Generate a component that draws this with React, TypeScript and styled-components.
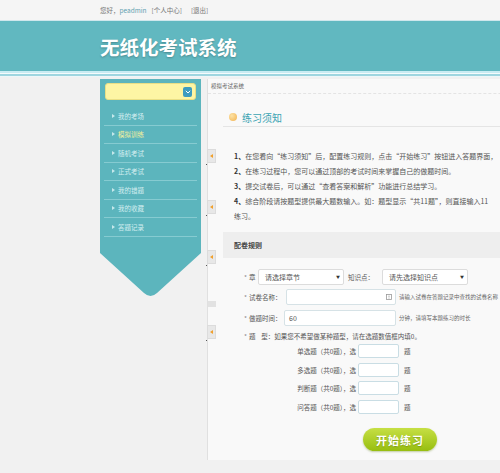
import React from 'react'
import styled, { createGlobalStyle } from 'styled-components'

const GlobalStyle = createGlobalStyle`
  html, body {
    margin: 0;
    padding: 0;
    background: #f1f1f1;
    overflow: hidden;
    font-family: "Noto Sans CJK SC", "Noto Sans", sans-serif;
  }
  * { box-sizing: border-box; }
`

const Page = styled.div`
  width: 500px;
  overflow: hidden;
`

const TopBar = styled.div`
  height: 21px;
  padding-left: 100px;
  display: flex;
  align-items: center;
  gap: 5px;
  font-size: 6.5px;
  color: #777;
  background: #f5f5f5;
  border-bottom: 1px solid #cfe7ec;

  b {
    font-weight: normal;
    color: #5e9fb0;
  }
`

const Header = styled.div`
  height: 50px;
  background: #61b8c0;
  padding-left: 100px;
  display: flex;
  align-items: center;
`

const Title = styled.h1`
  margin: 0;
  font-size: 19.5px;
  font-weight: bold;
  color: #fff;
  text-shadow: 0 1px 2px rgba(0, 0, 0, 0.25);
`

const Stripe = styled.div`
  height: 6px;
  background: linear-gradient(#c9ecf3 0, #c9ecf3 2px, #f4fbfc 2px, #f4fbfc 3px, #9fd6e0 3px, #9fd6e0 5px, #eef7f9 5px);
`

const Body = styled.div`
  display: flex;
  align-items: flex-start;
  padding-left: 100px;
  margin-top: 2px;
`

const Sidebar = styled.aside`
  width: 101px;
  flex-shrink: 0;
  display: flex;
  flex-direction: column;
`

const SideBody = styled.div`
  background: #5cb5bd;
  padding: 4px 4px 16px;
`

const Search = styled.div`
  margin: 0 1px;
  height: 17px;
  background: #fdf5a4;
  border-radius: 3px;
  border: 1px solid #e9df86;
  display: flex;
  align-items: center;
  justify-content: flex-end;
  padding-right: 3px;
`

const SearchBtn = styled.span`
  width: 9px;
  height: 10px;
  border-radius: 2px;
  background: #3d9cbf;
  display: flex;
  align-items: center;
  justify-content: center;
`

const Menu = styled.ul`
  list-style: none;
  margin: 7px 0 0;
  padding: 0;
`

const MenuItem = styled.li<{ $active?: boolean }>`
  height: 18.5px;
  border-bottom: 1px solid #86cbd1;
  display: flex;
  align-items: center;
  padding-left: 8px;
  gap: 3px;
  font-size: 6.5px;
  color: ${(p) => (p.$active ? '#f6f09c' : '#d3eef0')};

  &::before {
    content: '';
    border-left: 3px solid #c6e8eb;
    border-top: 2px solid transparent;
    border-bottom: 2px solid transparent;
  }
`

const Tail = styled.svg`
  display: block;
  margin-top: -1px;
`

const Main = styled.main`
  position: relative;
  flex: 0 0 700px;
  margin-left: 6px;
  background: #f9f9f9;
  border-left: 1px solid #e0e0e0;
  padding-bottom: 9px;
`

const Crumb = styled.div`
  height: 15px;
  line-height: 15px;
  padding-left: 3px;
  font-size: 5.5px;
  color: #666;
  border-bottom: 1px dashed #e4e4e4;
`

const Content = styled.div`
  padding-left: 15px;
`

const Heading = styled.h2`
  margin: 14px 0 0;
  height: 19px;
  display: flex;
  align-items: center;
  gap: 5px;
  padding-left: 6px;
  font-size: 10px;
  font-weight: normal;
  color: #3ba4b3;
  border-bottom: 1px solid #e5e5e5;
`

const Dot = styled.span`
  width: 8px;
  height: 8px;
  border-radius: 50%;
  background: radial-gradient(circle at 35% 35%, #fde3a6, #f2b24f);
`

const Notes = styled.ol`
  list-style: none;
  margin: 22px 0 0;
  padding-left: 11px;
  font-size: 7px;
  line-height: 15px;
  color: #555;

  li {
    white-space: nowrap;
  }
  b {
    color: #333;
  }
`

const Band = styled.div`
  margin-top: 8px;
  height: 26px;
  line-height: 26px;
  padding-left: 11px;
  background: #eeeeee;
  font-size: 7px;
  font-weight: bold;
  color: #444;
`

const Form = styled.div`
  padding-left: 21px;
  display: flex;
  flex-direction: column;
  font-size: 6.5px;
  color: #555;
`

const Row = styled.div<{ $gap: number; $h?: number }>`
  margin-top: ${(p) => p.$gap}px;
  height: ${(p) => p.$h ?? 16}px;
  display: flex;
  align-items: center;
  white-space: nowrap;
`

const Label = styled.span<{ $w: number }>`
  width: ${(p) => p.$w}px;
  flex-shrink: 0;

  i {
    font-style: normal;
    color: #888;
    margin-right: 2px;
  }
`

const Select = styled.div`
  width: 86px;
  height: 16px;
  flex-shrink: 0;
  background: #fff;
  border: 1px solid #dcdcdc;
  border-radius: 2px;
  display: flex;
  align-items: center;
  justify-content: space-between;
  padding: 0 3px 0 6px;
  font-size: 7px;
  color: #555;

  &::after {
    content: '▼';
    font-size: 4px;
    color: #333;
  }
`

const Input = styled.div<{ $w: number }>`
  width: ${(p) => p.$w}px;
  height: 16px;
  flex-shrink: 0;
  background: #fff;
  border: 1px solid #d6e2e6;
  border-radius: 2px;
  display: flex;
  align-items: center;
  justify-content: space-between;
  padding: 0 3px 0 4px;
  font-size: 7px;
  color: #555;
`

const Hint = styled.span`
  margin-left: 3px;
  font-size: 5.5px;
  color: #666;
`

const Count = styled.div<{ $gap: number }>`
  margin-top: ${(p) => p.$gap}px;
  height: 14px;
  display: flex;
  align-items: center;
  white-space: nowrap;
`

const CountLabel = styled.span`
  width: 112px;
  text-align: right;
  margin-right: 2px;
`

const CountBox = styled.div`
  width: 41px;
  height: 14px;
  background: #fff;
  border: 1px solid #c9dde4;
  border-radius: 2px;
`

const Unit = styled.span`
  margin-left: 5px;
`

const StartBtn = styled.button`
  margin: 14.5px 0 0 119px;
  width: 74px;
  height: 23px;
  border: none;
  border-radius: 12px;
  background: linear-gradient(#c6df44, #97be10);
  box-shadow: 0 1px 2px rgba(90, 120, 0, 0.35);
  color: #fff;
  font-family: inherit;
  font-size: 11px;
  font-weight: bold;
  letter-spacing: 1px;
  text-shadow: 0 1px 1px rgba(80, 100, 0, 0.4);
`

const Handle = styled.span<{ $top: number }>`
  position: absolute;
  left: -1px;
  top: ${(p) => p.$top}px;
  width: 9px;
  height: 14px;
  background: #e8e8e8;
  border: 1px solid #dcdcdc;
  display: flex;
  align-items: center;
  justify-content: center;

  &::before {
    content: '';
    border-right: 3px solid #f0a02c;
    border-top: 2px solid transparent;
    border-bottom: 2px solid transparent;
  }
  &::after {
    content: '';
    position: absolute;
    left: -2px;
    bottom: -3px;
    width: 1px;
    height: 1px;
    background: #555;
  }
`

const Stub = styled.span`
  position: absolute;
  left: 0;
  top: 222px;
  width: 8px;
  height: 6px;
  background: #e2e2e2;
`

const menu = ['我的考场', '模拟训练', '随机考试', '正式考试', '我的错题', '我的收藏', '答题记录']
const counts = ['单选题', '多选题', '判断题', '问答题']

export default function App() {
  return (
    <Page>
      <GlobalStyle />
      <TopBar>
        <span>
          您好，<b>peadmin</b>
        </span>
        <span>[个人中心]</span>
        <span style={{ marginLeft: 4 }}>[退出]</span>
      </TopBar>
      <Header>
        <Title>无纸化考试系统</Title>
      </Header>
      <Stripe />
      <Body>
        <Sidebar>
          <SideBody>
            <Search>
              <SearchBtn>
                <svg width="6" height="4" viewBox="0 0 6 4">
                  <path d="M0.8 0.8 L3 3 L5.2 0.8" stroke="#fff" strokeWidth="1" fill="none" />
                </svg>
              </SearchBtn>
            </Search>
            <Menu>
              {menu.map((m) => (
                <MenuItem key={m} $active={m === '模拟训练'}>
                  {m}
                </MenuItem>
              ))}
            </Menu>
          </SideBody>
          <Tail width="101" height="46" viewBox="0 0 101 46">
            <path d="M0 0 H101 V1 L57 41 Q50.5 47 44 41 L0 1 Z" fill="#5cb5bd" />
          </Tail>
        </Sidebar>
        <Main>
          <Handle $top={70} />
          <Handle $top={121} />
          <Handle $top={171} />
          <Stub />
          <Handle $top={246} />
          <Crumb>模拟考试系统</Crumb>
          <Content>
            <Heading>
              <Dot />
              练习须知
            </Heading>
            <Notes>
              <li>
                <b>1、</b>在您看向“练习须知”后，配置练习规则，点击“开始练习”按钮进入答题界面，
              </li>
              <li>
                <b>2、</b>在练习过程中，您可以通过顶部的考试时间来掌握自己的做题时间。
              </li>
              <li>
                <b>3、</b>提交试卷后，可以通过“查看答案和解析”功能进行总结学习。
              </li>
              <li>
                <b>4、</b>综合阶段请按题型提供最大题数输入。如：题型显示“共11题”，则直接输入11
                <br />
                练习。
              </li>
            </Notes>
            <Band>配卷规则</Band>
            <Form>
              <Row $gap={11}>
                <Label $w={14}>
                  <i>*</i>章
                </Label>
                <Select>请选择章节</Select>
                <Label $w={34} style={{ marginLeft: 4 }}>
                  知识点：
                </Label>
                <Select>请先选择知识点</Select>
              </Row>
              <Row $gap={4}>
                <Label $w={42}>
                  <i>*</i>试卷名称：
                </Label>
                <Input $w={110}>
                  <span />
                  <svg width="6" height="6" viewBox="0 0 6 6">
                    <rect x="0.5" y="0.5" width="5" height="5" fill="none" stroke="#999" strokeWidth="0.8" />
                    <path d="M3 1.5 V3.5 M3 4.2 V4.8" stroke="#999" strokeWidth="0.8" />
                  </svg>
                </Input>
                <Hint>请输入试卷在答题记录中查找的试卷名称</Hint>
              </Row>
              <Row $gap={5}>
                <Label $w={40}>
                  <i>*</i>做题时间：
                </Label>
                <Input $w={112}>60</Input>
                <Hint>分钟，请填写本题练习的时长</Hint>
              </Row>
              <Row $gap={4} $h={12}>
                <Label $w={250}>
                  <i>*</i>题&nbsp;&nbsp;&nbsp;&nbsp;型：如果您不希望做某种题型，请在选题数值框内填0。
                </Label>
              </Row>
              {counts.map((c, i) => (
                <Count key={c} $gap={i === 0 ? 2 : 4.5}>
                  <CountLabel>{c}（共0题），选</CountLabel>
                  <CountBox />
                  <Unit>题</Unit>
                </Count>
              ))}
              <StartBtn>开始练习</StartBtn>
            </Form>
          </Content>
        </Main>
      </Body>
    </Page>
  )
}
